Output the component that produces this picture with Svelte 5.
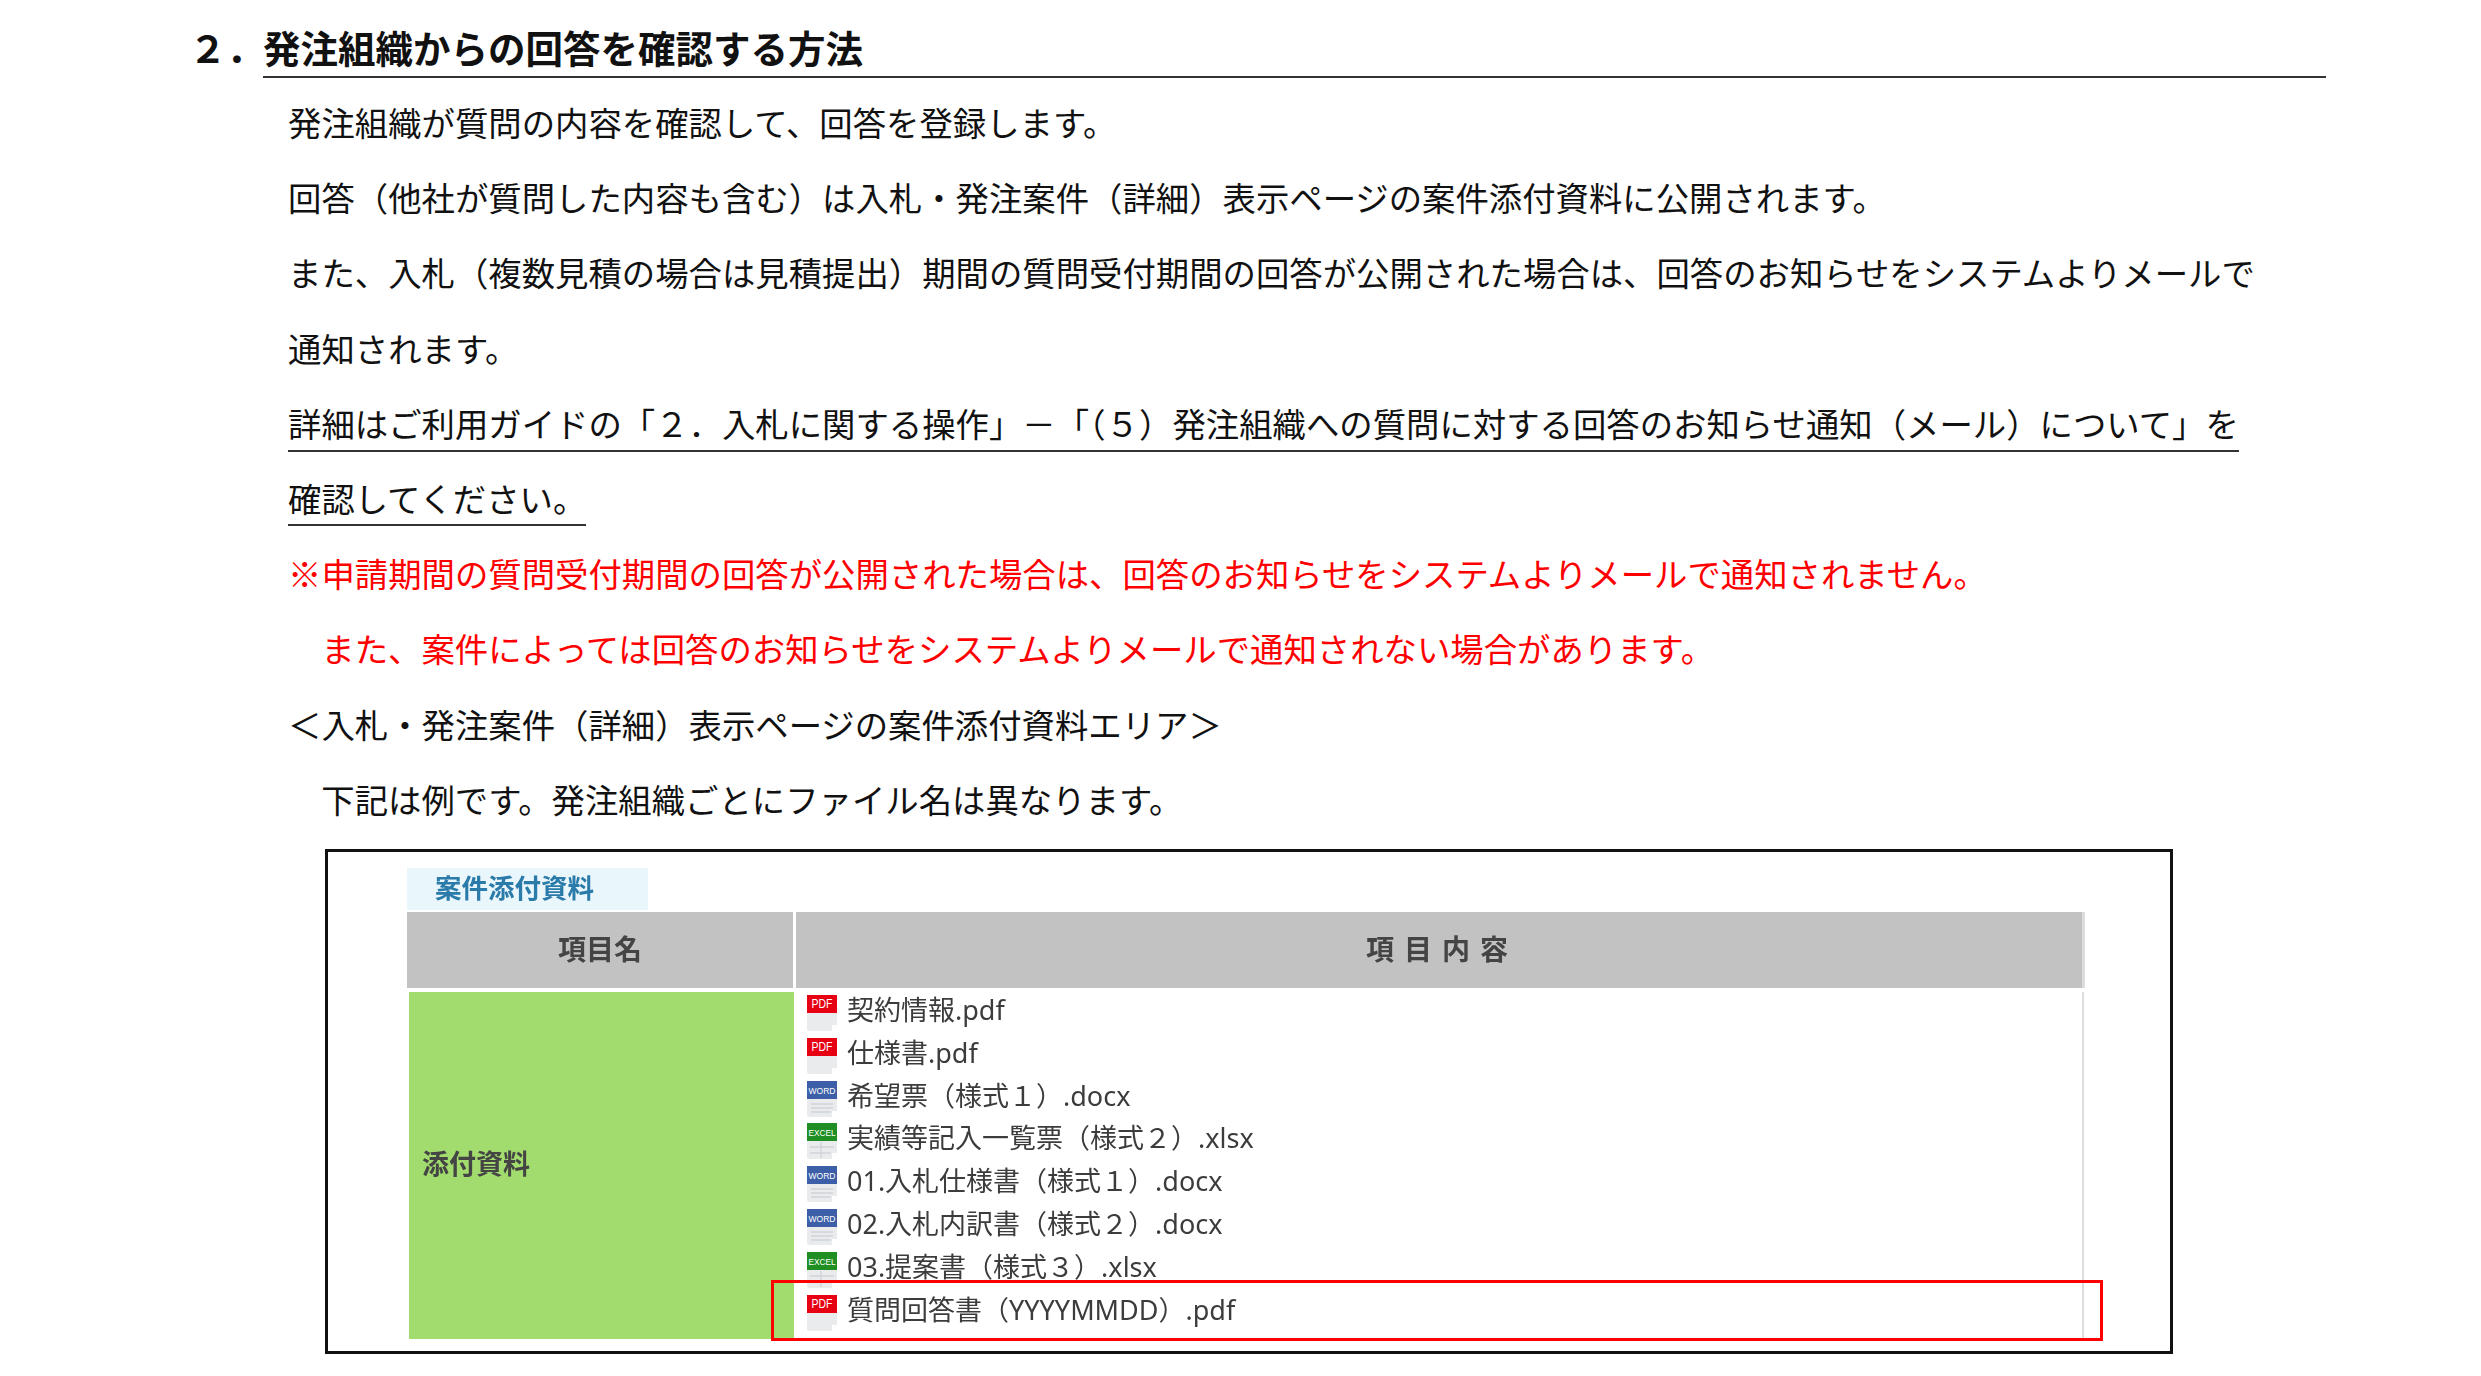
<script>
  const files = [
    { type: 'pdf', name: '契約情報.pdf' },
    { type: 'pdf', name: '仕様書.pdf' },
    { type: 'word', name: '希望票（様式１）.docx' },
    { type: 'excel', name: '実績等記入一覧票（様式２）.xlsx' },
    { type: 'word', name: '01.入札仕様書（様式１）.docx' },
    { type: 'word', name: '02.入札内訳書（様式２）.docx' },
    { type: 'excel', name: '03.提案書（様式３）.xlsx' },
    { type: 'pdf', name: '質問回答書（YYYYMMDD）.pdf' }
  ];
  const icons = {
    pdf: { color: '#e60012', label: 'PDF', size: 13, width: 21 },
    word: { color: '#3d5fa8', label: 'WORD', size: 9, width: 27 },
    excel: { color: '#1f8f23', label: 'EXCEL', size: 9, width: 27 }
  };
</script>

<main class="page">
  <h2 class="heading">
    <span class="number">２．</span>
    <span class="title">発注組織からの回答を確認する方法</span>
  </h2>

  <div class="body">
    <p>発注組織が質問の内容を確認して、回答を登録します。</p>
    <p>回答（他社が質問した内容も含む）は入札・発注案件（詳細）表示ページの案件添付資料に公開されます。</p>
    <p>また、入札（複数見積の場合は見積提出）期間の質問受付期間の回答が公開された場合は、回答のお知らせをシステムよりメールで</p>
    <p>通知されます。</p>
    <p><span class="under">詳細はご利用ガイドの「２．入札に関する操作」－「（５）発注組織への質問に対する回答のお知らせ通知（メール）について」を</span></p>
    <p><span class="under short">確認してください。</span></p>
    <p class="red">※申請期間の質問受付期間の回答が公開された場合は、回答のお知らせをシステムよりメールで通知されません。</p>
    <p class="red indent">また、案件によっては回答のお知らせをシステムよりメールで通知されない場合があります。</p>
    <p>＜入札・発注案件（詳細）表示ページの案件添付資料エリア＞</p>
    <p class="indent">下記は例です。発注組織ごとにファイル名は異なります。</p>
  </div>

  <section class="frame">
    <div class="tab">案件添付資料</div>
    <div class="head">
      <div>項目名</div>
      <div class="spaced">項目内容</div>
    </div>
    <div class="row">
      <div class="label">添付資料</div>
      <ul class="files">
        {#each files as file}
          <li>
            <svg class="icon" viewBox="0 0 30 36" width="30" height="36" aria-hidden="true">
              <path d="M0 0H30V30L25 36H2Q0 36 0 34Z" fill="#e9ebed" />
              <path d="M25 36V30H30Z" fill="#fff" />
              <rect width="30" height="18" fill={icons[file.type].color} />
              {#if file.type === 'word'}
                <path d="M4 23H26M4 27H26M4 31H24" stroke="#cfd3d8" stroke-width="1.3" />
              {:else if file.type === 'excel'}
                <path d="M3 24H27M3 30H24M14 19V35" stroke="#cfd3d8" stroke-width="1.3" />
              {/if}
              <text
                x="15"
                y="13"
                text-anchor="middle"
                fill="#fff"
                font-size={icons[file.type].size}
                textLength={icons[file.type].width}
                lengthAdjust="spacingAndGlyphs">{icons[file.type].label}</text>
            </svg>
            <span>{file.name}</span>
          </li>
        {/each}
      </ul>
    </div>
    <div class="highlight"></div>
  </section>
</main>

<style>
  :global(body) {
    margin: 0;
    background: #fff;
  }

  .page {
    width: 2481px;
    height: 1376px;
    box-sizing: border-box;
    padding: 20px 0 0 195px;
    overflow: hidden;
    font-family: "Noto Sans CJK JP", sans-serif;
    color: #111;
  }

  .heading {
    display: flex;
    width: 2131px;
    margin: 0;
    font-size: 37.5px;
    font-weight: 700;
    line-height: 54px;
  }

  .number {
    width: 74px;
    margin-left: -6px;
  }

  .title {
    flex: 1;
    padding-bottom: 2px;
    border-bottom: 2px solid #333;
  }

  .body {
    margin: 6px 0 0 93px;
    font-size: 33.38px;
    line-height: 75.2px;
  }

  p {
    margin: 0;
    white-space: nowrap;
  }

  .under {
    display: inline-block;
    height: 65px;
    border-bottom: 2px solid #333;
  }

  .short {
    height: 64px;
  }

  .red {
    color: #f00;
  }

  .indent {
    padding-left: 33.3px;
  }

  .frame {
    position: relative;
    width: 1848px;
    height: 505px;
    box-sizing: border-box;
    margin: 13px 0 0 130px;
    padding: 16px 0 0 79px;
    border: 3px solid #111;
    filter: blur(0.4px);
  }

  .tab {
    width: 241px;
    height: 42px;
    box-sizing: border-box;
    margin-bottom: 2px;
    padding-left: 28px;
    background: #e9f6fb;
    color: #2a7aaa;
    font-size: 26.5px;
    font-weight: 700;
    line-height: 38px;
  }

  .head {
    display: grid;
    grid-template-columns: 386px 1289px;
    column-gap: 3px;
    height: 76px;
    color: #444;
    font-size: 28px;
    font-weight: 700;
    line-height: 72px;
    text-align: center;
  }

  .head div {
    background: #c2c2c2;
  }

  .head .spaced {
    box-sizing: border-box;
    padding-left: 6px;
    border-right: 3px solid #ddd;
    letter-spacing: 10px;
  }

  .row {
    display: grid;
    grid-template-columns: 385px 1fr;
    width: 1675px;
    height: 347px;
    box-sizing: border-box;
    margin: 4px 0 0 2px;
    border-right: 2px solid #ddd;
  }

  .label {
    display: flex;
    align-items: center;
    padding: 0 0 6px 13px;
    background: #a2db6e;
    color: #444;
    font-size: 27px;
    font-weight: 700;
  }

  .files {
    margin: 0;
    padding: 3px 0 0 13px;
    list-style: none;
    color: #3c3c3c;
    font-family: "Noto Sans", "Noto Sans CJK JP", sans-serif;
    font-size: 27px;
  }

  .files li {
    display: flex;
    gap: 10px;
    height: 42.8px;
    line-height: 30px;
  }

  .icon {
    flex: none;
    font-family: "Liberation Sans", sans-serif;
  }

  .highlight {
    position: absolute;
    left: 443px;
    top: 428px;
    width: 1332px;
    height: 61px;
    box-sizing: border-box;
    border: 3px solid #f00;
  }
</style>
